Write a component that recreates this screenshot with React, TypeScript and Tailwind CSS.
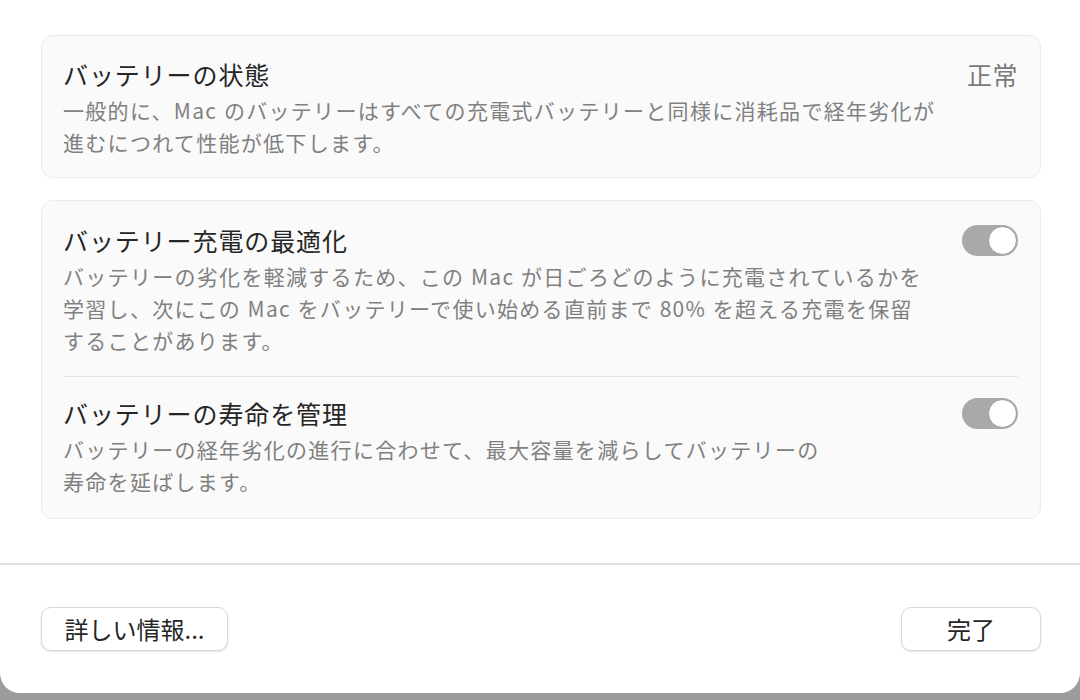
const font = "font-['Noto_Sans_CJK_JP','Noto_Sans',sans-serif]";

function Toggle() {
  return (
    <div className="shrink-0 w-[56px] h-[31px] rounded-full bg-[#a9a9a9] flex items-center justify-end p-[1px]">
      <div className="w-[29px] h-[29px] rounded-full bg-white border border-[#9a9a9a]" />
    </div>
  );
}

function Row({ title, lines, right }: { title: string; lines: string[]; right: React.ReactNode }) {
  return (
    <div className="flex items-start justify-between">
      <div>
        <div className="text-[25px] leading-[30px] tracking-[0.9px] text-[#262626]">{title}</div>
        <div className="mt-[5px] text-[21px] leading-[32px] tracking-[1.3px] text-[#808080] whitespace-nowrap">
          {lines.map((l) => (
            <div key={l}>{l}</div>
          ))}
        </div>
      </div>
      {right}
    </div>
  );
}

export default function App() {
  return (
    <div className={`w-[1080px] h-[700px] bg-[#9c9c9c] ${font}`}>
      <div className="h-[693px] bg-white rounded-b-[20px] flex flex-col">
        <div className="pl-[41px] pr-[39px] pt-[35px]">
          {/* Battery health */}
          <div className="bg-[#fafafa] border border-[#ebebeb] rounded-[12px] pl-[21px] pr-[22px] pt-[23px] pb-[19px]">
            <Row
              title="バッテリーの状態"
              lines={[
                "一般的に、Mac\u2005のバッテリーはすべての充電式バッテリーと同様に消耗品で経年劣化が",
                "進むにつれて性能が低下します。",
              ]}
              right={<span className="text-[25px] leading-[30px] tracking-[0.5px] text-[#7a7a7a]">正常</span>}
            />
          </div>

          {/* Charging options */}
          <div className="mt-[22px] bg-[#fafafa] border border-[#ebebeb] rounded-[12px] pl-[21px] pr-[22px] pt-[24px] pb-[21px]">
            <Row
              title="バッテリー充電の最適化"
              lines={[
                "バッテリーの劣化を軽減するため、この\u2005Mac\u2005が日ごろどのように充電されているかを",
                "学習し、次にこの\u2005Mac\u2005をバッテリーで使い始める直前まで\u200580%\u2005を超える充電を保留",
                "することがあります。",
              ]}
              right={<Toggle />}
            />
            <div className="mt-[20px] mb-[21px] h-px bg-[#e4e4e4]" />
            <Row
              title="バッテリーの寿命を管理"
              lines={[
                "バッテリーの経年劣化の進行に合わせて、最大容量を減らしてバッテリーの",
                "寿命を延ばします。",
              ]}
              right={<Toggle />}
            />
          </div>
        </div>

        <div className="mt-[44px] h-[2px] bg-[#e2e2e2]" />

        <div className="pl-[41px] pr-[39px] pt-[42px] flex justify-between">
          <button className="w-[187px] h-[44px] rounded-[10px] bg-white border border-[#d8d8d8] shadow-[0_1px_2px_rgba(0,0,0,0.12)] text-[24px] text-[#262626]">
            詳しい情報...
          </button>
          <button className="w-[140px] h-[44px] rounded-[10px] bg-white border border-[#d8d8d8] shadow-[0_1px_2px_rgba(0,0,0,0.12)] text-[24px] text-[#262626]">
            完了
          </button>
        </div>
      </div>
    </div>
  );
}
